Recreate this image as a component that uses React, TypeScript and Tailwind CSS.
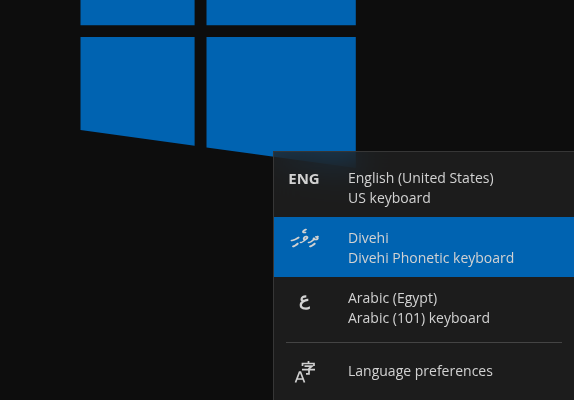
import React from "react";

type Language = {
  id: string;
  badge: string;
  badgeClass: string;
  lang: string;
  name: string;
  keyboard: string;
  selected?: boolean;
};

const languages: Language[] = [
  {
    id: "en",
    badge: "ENG",
    badgeClass: "text-[15px] leading-5 font-bold",
    lang: "en",
    name: "English (United States)",
    keyboard: "US keyboard",
  },
  {
    id: "dv",
    badge: "ދިވެހި",
    badgeClass: "text-[18px] leading-4 font-bold",
    lang: "dv",
    name: "Divehi",
    keyboard: "Divehi Phonetic keyboard",
    selected: true,
  },
  {
    id: "ar",
    badge: "ع",
    badgeClass: "text-[18px] leading-5 font-semibold",
    lang: "ar",
    name: "Arabic (Egypt)",
    keyboard: "Arabic (101) keyboard",
  },
];

function WindowsLogo() {
  return (
    <svg
      className="absolute left-20 top-0"
      width="276"
      height="170"
      viewBox="0 0 276 170"
      fill="#0063b1"
      aria-hidden="true"
    >
      <path d="M.5 0H114.6V25.2H.5Z" />
      <path d="M126.5 0H275.8V25.2H126.5Z" />
      <path d="M.5 37H114.6V145.8L.5 130Z" />
      <path d="M126.5 37H275.8V168L126.5 147.4Z" />
    </svg>
  );
}

function LanguageIcon() {
  return (
    <svg width="22" height="22" viewBox="0 0 22 22" fill="none" stroke="#d0d0d0" strokeWidth="1.7" aria-hidden="true">
      <path d="M2.500 21.500 6.500 11H7.500L11.500 21.500M4 18H10" />
      <path d="M15.500 0V2.500M9.500 5V2.500H21V5M11.500 5.200H19L16 7.500V12.800H13M9 8.700H22" />
    </svg>
  );
}

export default function App() {
  return (
    <main className="relative h-screen overflow-hidden bg-[#0d0d0d] font-['Open_Sans','Noto_Sans',sans-serif] text-[#d2d2d2]">
      <WindowsLogo />
      <div className="absolute bottom-0 right-0 w-[301px] border-l border-t border-[#363636] bg-[#232323]/70 pt-[5px] backdrop-blur-lg">
        <div className="flex flex-col">
          {languages.map((l) => (
            <button
              key={l.id}
              type="button"
              aria-pressed={!!l.selected}
              className={`flex h-15 items-start pt-[11px] text-left ${l.selected ? "bg-[#0063b1]" : ""}`}
            >
              <span lang={l.lang} className={`w-15 text-center ${l.badgeClass}`}>
                {l.badge}
              </span>
              <span className="flex flex-col pl-[14px] text-[14px] leading-5">
                <span>{l.name}</span>
                <span>{l.keyboard}</span>
              </span>
            </button>
          ))}
        </div>
        <hr className="mx-3 mt-[5px] border-[#444444]" />
        <button type="button" className="flex h-[57px] w-full items-center pb-[2px] text-left">
          <span className="flex w-15 justify-center pt-[2px]">
            <LanguageIcon />
          </span>
          <span className="pl-[14px] text-[14px] leading-5">Language preferences</span>
        </button>
      </div>
    </main>
  );
}
